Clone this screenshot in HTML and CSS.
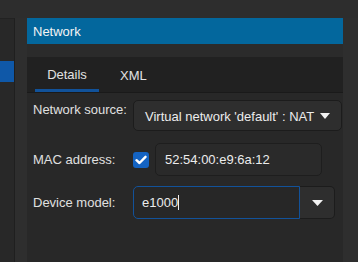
FILE: index.html
```html
<!DOCTYPE html>
<html>
<head>
<meta charset="utf-8">
<link rel="stylesheet" href="styles.css">
</head>
<body>
<div class="window">
  <div class="topband"></div>
  <div class="body-row">
    <div class="sidebar">
      <div class="side-item selected"></div>
    </div>
    <div class="strip"></div>
    <div class="main">
      <div class="header">Network</div>
      <div class="spacer"></div>
      <div class="notebook">
        <div class="tabbar">
          <div class="tab active">Details</div>
          <div class="tab plain">XML</div>
        </div>
        <div class="content">
          <div class="row row-top">
            <div class="label label-top">Network source:</div>
            <div class="dropdown wide">
              <span class="dd-text">Virtual network 'default' : NAT</span>
              <svg class="arrow" width="10" height="6" viewBox="0 0 10 6"><path d="M0 0 H10 L5 6 Z" fill="#f2f2f2"/></svg>
            </div>
          </div>
          <div class="row">
            <div class="label">MAC address:</div>
            <div class="check">
              <svg width="12" height="10" viewBox="0 0 12 10"><path d="M1.5 5.2 L4.5 8 L10.5 1.8" fill="none" stroke="#fff" stroke-width="2.4" stroke-linecap="round" stroke-linejoin="round"/></svg>
            </div>
            <div class="entry mac">52:54:00:e9:6a:12</div>
          </div>
          <div class="row">
            <div class="label">Device model:</div>
            <div class="combo">
              <div class="combo-entry">e1000<span class="cursor"></span></div>
              <div class="combo-btn">
                <svg width="11" height="6" viewBox="0 0 11 6"><path d="M0 0 H11 L5.5 6 Z" fill="#f2f2f2"/></svg>
              </div>
            </div>
          </div>
        </div>
      </div>
    </div>
    <div class="strip right"></div>
  </div>
</div>
</body>
</html>
```

FILE: styles.css
```css
html, body {
  margin: 0;
  padding: 0;
  background: #2d2d2d;
  width: 358px;
  height: 262px;
  overflow: hidden;
  font-family: "Liberation Sans", Arial, sans-serif;
  font-size: 13px;
  color: #e6e6e6;
}
.window {
  display: flex;
  flex-direction: column;
  height: 262px;
}
.topband {
  height: 18px;
  flex: none;
  background: #2d2d2d;
}
.body-row {
  display: flex;
  flex: 1;
}
.sidebar {
  width: 15px;
  flex: none;
  background: #282828;
  border-right: 1px solid #1f1f1f;
  border-top: 1px solid #222;
  padding-top: 42px;
  box-sizing: border-box;
}
.side-item.selected {
  height: 21px;
  background: #0f58a8;
}
.strip {
  width: 12px;
  flex: none;
  background: #2e2e2e;
}
.strip.right {
  width: 15px;
}
.main {
  width: 316px;
  flex: none;
  display: flex;
  flex-direction: column;
  background: #282828;
}
.header {
  height: 26px;
  background: #03679d;
  color: #f4f4f4;
  padding-left: 6px;
  display: flex;
  align-items: center;
  padding-top: 1px;
  box-sizing: border-box;
}
.spacer {
  height: 13px;
  background: #2b2b2b;
}
.notebook {
  flex: 1;
  display: flex;
  flex-direction: column;
}
.tabbar {
  height: 36px;
  background: #212121;
  border-bottom: 1px solid #1a1a1a;
  display: flex;
  padding-left: 8px;
  box-sizing: border-box;
}
.tab {
  display: flex;
  align-items: center;
  justify-content: center;
  color: #e2e2e2;
  box-sizing: border-box;
  padding-top: 1px;
}
.tab.active {
  width: 64px;
  border-bottom: 3px solid #11529a;
  padding-top: 3px;
}
.tab.plain {
  padding: 1px 21px 0 21px;
}
.content {
  padding: 7px 1px 0 6px;
  display: flex;
  flex-direction: column;
}
.row {
  display: flex;
  align-items: center;
  margin-bottom: 10px;
}
.row-top {
  align-items: flex-start;
  margin-bottom: 12px;
}
.label {
  width: 100px;
  flex: none;
  color: #e0e0e0;
}
.label-top {
  padding-top: 2px;
}
.dropdown {
  height: 31px;
  flex: 1;
  box-sizing: border-box;
  border: 1px solid #1c1c1c;
  border-radius: 5px;
  background: #2e2e2e;
  display: flex;
  align-items: center;
  padding: 2px 11px 0 11px;
  color: #ececec;
}
.dd-text {
  flex: 1;
  white-space: nowrap;
}
.arrow {
  margin-left: 4px;
  margin-top: -1px;
}
.check {
  width: 16px;
  height: 16px;
  border-radius: 3px;
  background: #1463c2;
  display: flex;
  align-items: center;
  justify-content: center;
  flex: none;
}
.entry.mac {
  margin-left: 6px;
  width: 167px;
  height: 33px;
  box-sizing: border-box;
  border: 1px solid #1e1e1e;
  border-radius: 5px;
  background: #2a2a2a;
  display: flex;
  align-items: center;
  padding-left: 9px;
  color: #ececec;
}
.combo {
  display: flex;
  height: 33px;
}
.combo-entry {
  width: 167px;
  box-sizing: border-box;
  border: 1px solid #12529a;
  border-radius: 5px 0 0 5px;
  background: #272727;
  display: flex;
  align-items: center;
  padding-left: 8px;
  color: #ececec;
}
.cursor {
  display: inline-block;
  width: 1px;
  height: 15px;
  background: #eee;
}
.combo-btn {
  width: 35px;
  box-sizing: border-box;
  border: 1px solid #1c1c1c;
  border-left: none;
  border-radius: 0 5px 5px 0;
  background: #2e2e2e;
  display: flex;
  align-items: center;
  justify-content: center;
}
```
